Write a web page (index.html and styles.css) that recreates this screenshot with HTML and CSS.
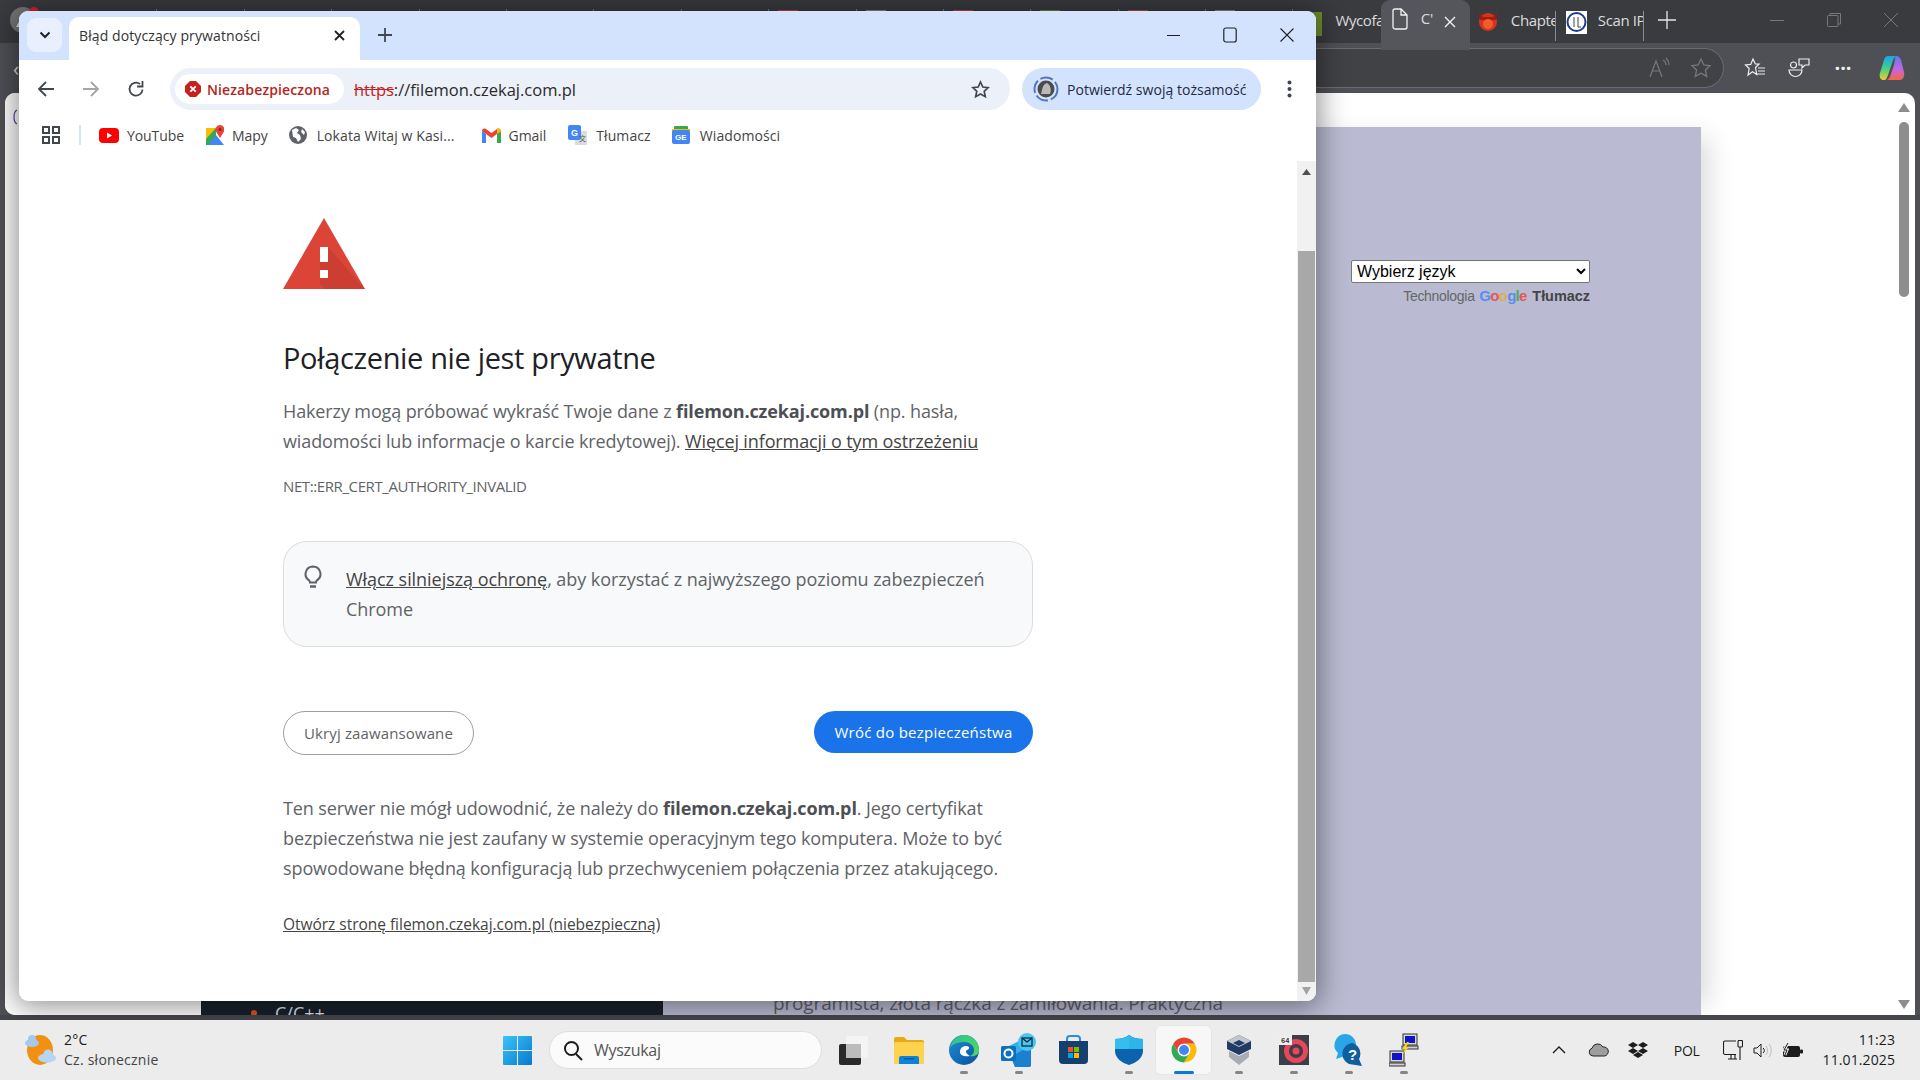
FILE: index.html
```html
<!DOCTYPE html>
<html lang="pl">
<head>
<meta charset="utf-8">
<title>Błąd dotyczący prywatności</title>
<link rel="stylesheet" href="styles.css">
</head>
<body>
<div class="desktop">
  <div class="screen">
    <!-- background Edge window -->
    <div class="edge">
      <div class="e-tabs">
        <div class="e-first"><svg width="28" height="28" viewBox="0 0 28 28"><circle cx="13" cy="15" r="13" fill="#777"/><path d="M6 22 14 8l6 14z" fill="#ddd"/><circle cx="24" cy="7" r="5" fill="#d9232e"/></svg></div>
        <div class="e-tab"></div>
        <div class="e-tab"></div>
        <div class="e-tab"></div>
        <div class="e-tab"></div>
        <div class="e-tab"></div>
        <div class="e-tab"></div>
        <div class="e-tab"></div>
        <div class="e-tab"></div>
        <div class="e-tab"><i class="fav fav-red"></i></div>
        <div class="e-tab"><i class="fav fav-grey"></i></div>
        <div class="e-tab"><i class="fav fav-red"></i></div>
        <div class="e-tab"><i class="fav fav-green"></i></div>
        <div class="e-tab"><i class="fav fav-red"></i></div>
        <div class="e-tab"><i class="fav fav-grey"></i></div>
        <div class="e-tab e-text"><i class="fav fav-mix"></i><span class="e-label">Wycofa</span></div>
        <div class="e-tab e-active">
          <svg width="16" height="22" viewBox="0 0 16 22" fill="none" stroke="#f2f2f2" stroke-width="1.3"><path d="M1 3a2 2 0 0 1 2-2h6l6 6v12a2 2 0 0 1-2 2H3a2 2 0 0 1-2-2zM9 1v6h6"/></svg>
          <span class="e-label e-label-short">C'</span>
          <svg width="12" height="12" viewBox="0 0 12 12" stroke="#f2f2f2" stroke-width="1.4"><path d="M1 1l10 10M11 1 1 11"/></svg>
        </div>
        <div class="e-tab e-text e-wide1">
          <svg width="20" height="22" viewBox="0 0 20 22"><circle cx="10" cy="12" r="9" fill="#d8321e"/><path d="M1 2l4 5h10l4-5-1 8H2z" fill="#a31a12"/><circle cx="10" cy="14" r="5" fill="#f25c2b"/></svg>
          <span class="e-label">Chapte</span>
        </div>
        <div class="e-tab e-text e-wide2">
          <svg width="21" height="24" viewBox="0 0 21 24"><rect y="1" width="21" height="23" fill="#fff"/><circle cx="10.500" cy="12" r="9" fill="#fff" stroke="#1c3f88" stroke-width="2"/><path d="M8 7v10M12 7v10h3" stroke="#444" fill="none"/></svg>
          <span class="e-label">Scan IP</span>
        </div>
        <svg class="e-plus" width="18" height="18" viewBox="0 0 18 18" stroke="#e6e6e6" stroke-width="1.3"><path d="M9 0v18M0 9h18"/></svg>
        <div class="e-controls">
          <svg width="14" height="14" viewBox="0 0 14 14" stroke="#77787c"><path d="M0 7.500h14"/></svg>
          <svg width="14" height="14" viewBox="0 0 14 14" fill="none" stroke="#77787c"><rect x=".5" y="2.500" width="10.500" height="11" rx="1"/><path d="M3 2.500V.5h10.500v10.500H11"/></svg>
          <svg width="14" height="14" viewBox="0 0 14 14" stroke="#77787c"><path d="M0 0l14 14M14 0 0 14"/></svg>
        </div>
      </div>
      <div class="e-toolbar">
        <span class="e-back">‹</span>
        <div class="e-address">
          <svg width="22" height="22" viewBox="0 0 22 22" fill="none" stroke="#77787c" stroke-width="1.2"><path d="M1 20 7 4l6 16M3 14h8M14 3c2 1 3 3 3 5M17 1c2 2 3 4 3 7"/></svg>
          <svg width="22" height="22" viewBox="0 0 22 22" fill="none" stroke="#77787c" stroke-width="1.300"><path d="M11 2l2.800 6 6.200.7-4.600 4.300 1.300 6.400-5.700-3.200-5.700 3.200L6.600 13 2 8.700 8.200 8z"/></svg>
        </div>
        <div class="e-tools">
          <svg width="22" height="22" viewBox="0 0 22 22" fill="none" stroke="#eee" stroke-width="1.200"><path d="M9 2l2.300 5H15l-3.500 3.500 1.200 7-4.200-2.800L4 18l1.200-6.500L1.500 8 6.700 7.400zM14 11h7M14 14h7M13 17h8"/></svg>
          <svg width="22" height="22" viewBox="0 0 22 22" fill="none" stroke="#eee" stroke-width="1.200"><circle cx="5.500" cy="8" r="3"/><path d="M11 2h10v6h-4l-3 3V8h-3zM1 13h13a6.500 6.500 0 0 1-13 0z"/></svg>
          <span class="e-dots">···</span>
          <svg width="26" height="26" viewBox="0 0 26 26"><defs><linearGradient id="cop1" x1="0" y1="0" x2="0" y2="1"><stop offset="0" stop-color="#19a4e5"/><stop offset=".5" stop-color="#3fd08b"/><stop offset="1" stop-color="#e9d22a"/></linearGradient><linearGradient id="cop2" x1="0" y1="0" x2="0" y2="1"><stop offset="0" stop-color="#5d7bf0"/><stop offset=".55" stop-color="#c466e4"/><stop offset="1" stop-color="#f5663e"/></linearGradient></defs><path d="M17 1c3 0 4 2 5 4l3 12c1 4-1 8-4 8H8c2-1 3-3 4-6l3-9c1-4 1-8 2-9z" fill="url(#cop2)"/><path d="M9 1h9c-3 1-4 4-5 7l-3 9c-1 3-2 7-4 8H4C1 25 0 21 1 18L5 5C6 2 7 1 9 1z" fill="url(#cop1)"/></svg>
        </div>
      </div>
      <div class="e-page">
        <div class="e-left"><svg width="6" height="16" viewBox="0 0 6 16" fill="none" stroke="#5a3fa8" stroke-width="1.200"><path d="M5 1C1 3 1 13 5 15"/></svg></div>
        <div class="e-dark"><span class="e-bullet"></span><span class="e-cpp">C/C++</span></div>
        <div class="e-panel">
          <div class="translate">
            <select class="lang"><option>Wybierz język</option></select>
            <div class="powered">Technologia <span class="g-logo"><b class="g1">G</b><b class="g2">o</b><b class="g3">o</b><b class="g1">g</b><b class="g4">l</b><b class="g2">e</b></span> <b class="tl">Tłumacz</b></div>
          </div>
          <p class="e-text-bottom">programista, złota rączka z zamiłowania. Praktyczna</p>
        </div>
        <div class="e-right">
          <div class="e-scroll">
            <svg width="12" height="9" viewBox="0 0 12 9"><path d="M6 0l6 9H0z" fill="#8d8d8d"/></svg>
            <div class="e-thumb"></div>
            <div class="e-scroll-fill"></div>
            <svg width="12" height="9" viewBox="0 0 12 9"><path d="M6 9 12 0H0z" fill="#8d8d8d"/></svg>
          </div>
        </div>
      </div>
    </div>

    <!-- foreground Chrome window -->
    <div class="chrome">
      <div class="c-tabs">
        <div class="tab-search"><svg width="12" height="8" viewBox="0 0 12 8" fill="none" stroke="#202124" stroke-width="2"><path d="M1.500 1.500 6 6l4.500-4.500"/></svg></div>
        <div class="c-tab">
          <span class="c-tab-title">Błąd dotyczący prywatności</span>
          <svg width="11" height="11" viewBox="0 0 11 11" stroke="#202124" stroke-width="1.800"><path d="M1 1l9 9M10 1 1 10"/></svg>
        </div>
        <svg class="c-plus" width="14" height="14" viewBox="0 0 14 14" stroke="#41474f" stroke-width="1.800"><path d="M7 0v14M0 7h14"/></svg>
        <div class="c-controls">
          <svg width="13" height="13" viewBox="0 0 13 13" stroke="#202124" stroke-width="1.100"><path d="M0 6.500h13"/></svg>
          <svg width="14" height="16" viewBox="0 0 14 16" fill="none" stroke="#202124" stroke-width="1.200"><rect x=".8" y="1" width="12.400" height="14" rx="2"/></svg>
          <svg width="14" height="14" viewBox="0 0 14 14" stroke="#202124" stroke-width="1.100"><path d="M.5.500l13 13M13.500.500l-13 13"/></svg>
        </div>
      </div>
      <div class="c-toolbar">
        <svg class="nav" width="18" height="18" viewBox="0 0 18 18" fill="none" stroke="#41474f" stroke-width="1.800"><path d="M17 9H2M9 2 2 9l7 7"/></svg>
        <svg class="nav" width="18" height="18" viewBox="0 0 18 18" fill="none" stroke="#a2a5a9" stroke-width="1.800"><path d="M1 9h15M9 2l7 7-7 7"/></svg>
        <svg class="nav" width="18" height="18" viewBox="0 0 18 18" fill="none" stroke="#41474f" stroke-width="1.800"><path d="M15.500 9.500A6.500 6.500 0 1 1 13 4"/><path d="M15.500 1v5.500H10" fill="none"/></svg>
        <div class="omnibox">
          <div class="chip">
            <svg width="16" height="16" viewBox="0 0 16 16"><path d="M5 0h6l5 5v6l-5 5H5l-5-5V5z" fill="#c5221f"/><path d="M5.300 5.300l5.400 5.400M10.700 5.300l-5.400 5.400" stroke="#fff" stroke-width="1.800"/></svg>
            <span class="chip-text">Niezabezpieczona</span>
          </div>
          <span class="url"><s class="https">https</s>://filemon.czekaj.com.pl</span>
          <svg class="star" width="19" height="19" viewBox="0 0 19 19" fill="none" stroke="#41474f" stroke-width="1.700"><path d="M9.500 2l2.300 5 5.400.6-4 3.700 1.100 5.400-4.800-2.700-4.800 2.700 1.100-5.400-4-3.700 5.400-.6z"/></svg>
        </div>
        <div class="profile">
          <svg width="26" height="26" viewBox="0 0 26 26"><circle cx="13" cy="13" r="11.500" fill="none" stroke="#5277b8" stroke-width="2" stroke-dasharray="13 3"/><circle cx="13" cy="13" r="8.500" fill="#4c4c4c"/><path d="M8 18c2-6 1-9 6-11 3 2 5 6 3 11z" fill="#b9b9b9"/></svg>
          <span>Potwierdź swoją tożsamość</span>
        </div>
        <svg class="menu" width="5" height="18" viewBox="0 0 5 18" fill="#41474f"><circle cx="2.500" cy="2.500" r="2"/><circle cx="2.500" cy="9" r="2"/><circle cx="2.500" cy="15.500" r="2"/></svg>
      </div>
      <div class="c-bookmarks">
        <svg class="apps" width="18" height="18" viewBox="0 0 18 18" fill="none" stroke="#41474f" stroke-width="2"><rect x="1" y="1" width="6" height="6"/><rect x="11" y="1" width="6" height="6"/><rect x="1" y="11" width="6" height="6"/><rect x="11" y="11" width="6" height="6"/></svg>
        <span class="bm-sep"></span>
        <span class="bm bm-yt"><svg width="20" height="15" viewBox="0 0 20 15"><rect width="20" height="15" rx="4" fill="#f00"/><path d="M8 4.500l5 3-5 3z" fill="#fff"/></svg>YouTube</span>
        <span class="bm bm-maps"><svg width="18" height="20" viewBox="0 0 18 20"><path d="M0 3h10v17H0z" fill="#34a853"/><path d="M2 20 10 10l8 10z" fill="#4285f4"/><path d="M0 14 10 3H0z" fill="#fbbc04"/><path d="M14 0a4.500 4.500 0 0 1 4 6.500L14 13l-4-6.500A4.500 4.500 0 0 1 14 0z" fill="#ea4335"/><circle cx="14" cy="4.500" r="1.500" fill="#8e2219"/></svg>Mapy</span>
        <span class="bm bm-web"><svg width="18" height="18" viewBox="0 0 18 18"><circle cx="9" cy="9" r="9" fill="#5f6368"/><path d="M3 4l4-2 3 2-2 3 3 2 1 4-3 3-2-4-3-1zM13 3l3 3-1 3-3-3z" fill="#fff"/></svg>Lokata Witaj w Kasi...</span>
        <span class="bm bm-gmail"><svg width="19" height="15" viewBox="0 0 19 15"><path d="M0 3v12h4V6z" fill="#4285f4"/><path d="M15 6v9h4V3z" fill="#34a853"/><path d="M0 3c0-2 2-3 4-2l5.500 4L15 1c2-1 4 0 4 2l-4 3-5.500 4L4 6z" fill="#ea4335"/><path d="M15 1c2-1 4 0 4 2l-4 3z" fill="#fbbc04"/></svg>Gmail</span>
        <span class="bm bm-tr"><svg width="19" height="20" viewBox="0 0 19 20"><rect x="7" y="6" width="12" height="14" rx="1" fill="#dadce0"/><rect width="13" height="15" rx="2" fill="#4285f4"/><text x="3" y="11" class="tr-g">G</text><text x="11" y="16" class="tr-a">文</text></svg>Tłumacz</span>
        <span class="bm bm-news"><svg width="18" height="18" viewBox="0 0 18 18"><rect x="2" y="0" width="14" height="8" rx="1" fill="#34a853"/><rect x="0" y="3" width="18" height="4" fill="#fbbc04"/><rect y="4" width="18" height="14" rx="2" fill="#4285f4"/><text x="3" y="14" class="news-g">GE</text></svg>Wiadomości</span>
      </div>
      <div class="c-page">
        <div class="interstitial">
          <svg class="warn" width="82" height="71" viewBox="0 0 82 71"><path d="M41 0l41 71H0z" fill="#db4437"/><path d="M37 29h8l37 42H42L37 66z" fill="#c13b30" opacity=".55"/><rect x="37" y="29" width="8" height="15" fill="#fff"/><rect x="37" y="52" width="8" height="8" fill="#fff"/></svg>
          <h1 class="title">Połączenie nie jest prywatne</h1>
          <p class="body-text">Hakerzy mogą próbować wykraść Twoje dane z <b>filemon.czekaj.com.pl</b> (np. hasła, wiadomości lub informacje o karcie kredytowej). <u>Więcej informacji o tym ostrzeżeniu</u></p>
          <p class="err">NET::ERR_CERT_AUTHORITY_INVALID</p>
          <div class="enhanced">
            <svg class="bulb" width="18" height="24" viewBox="0 0 18 24" fill="none" stroke="#5f6368" stroke-width="2"><path d="M9 1.500a7.500 7.500 0 0 1 4 13.800c-.6.500-1 1-1 2.200H6c0-1.200-.4-1.700-1-2.200A7.500 7.500 0 0 1 9 1.500z"/><path d="M6 21.500h6" stroke-width="2.500"/></svg>
            <p class="enhanced-text"><u>Włącz silniejszą ochronę</u>, aby korzystać z najwyższego poziomu zabezpieczeń Chrome</p>
          </div>
          <div class="actions">
            <button class="btn-ghost">Ukryj zaawansowane</button>
            <button class="btn-primary">Wróć do bezpieczeństwa</button>
          </div>
          <p class="details">Ten serwer nie mógł udowodnić, że należy do <b>filemon.czekaj.com.pl</b>. Jego certyfikat bezpieczeństwa nie jest zaufany w systemie operacyjnym tego komputera. Może to być spowodowane błędną konfiguracją lub przechwyceniem połączenia przez atakującego.</p>
          <p class="proceed"><u>Otwórz stronę filemon.czekaj.com.pl (niebezpieczną)</u></p>
        </div>
        <div class="c-scroll">
          <svg width="9" height="6" viewBox="0 0 9 6"><path d="M4.500 0 9 6H0z" fill="#505050"/></svg>
          <div class="c-scroll-gap"></div>
          <div class="c-thumb"></div>
          <svg width="9" height="9" viewBox="0 0 9 9"><path d="M4.500 9 9 1H0z" fill="#a3a3a3"/></svg>
        </div>
      </div>
    </div>
  </div>

  <div class="taskbar">
    <div class="weather">
      <svg width="36" height="32" viewBox="0 0 36 32"><ellipse cx="15" cy="16" rx="13" ry="15" fill="#f29111"/><ellipse cx="7" cy="9" rx="7" ry="4" fill="#a6c8ec"/><circle cx="7" cy="5" r="4" fill="#a6c8ec"/><ellipse cx="22" cy="24" rx="9" ry="4.500" fill="#b7d4f0"/><circle cx="23" cy="20" r="4.500" fill="#b7d4f0"/></svg>
      <div class="weather-text"><span class="temp">2°C</span><span class="cond">Cz. słonecznie</span></div>
    </div>
    <div class="win">
      <svg width="29" height="29" viewBox="0 0 29 29"><defs><linearGradient id="winb" x1="0" y1="0" x2="1" y2="1"><stop offset="0" stop-color="#3cc4f7"/><stop offset="1" stop-color="#0878d0"/></linearGradient></defs><path d="M0 1a1 1 0 0 1 1-1h13v14H0zM15 0h13a1 1 0 0 1 1 1v13H15zM0 15h14v14H1a1 1 0 0 1-1-1zM15 15h14v13a1 1 0 0 1-1 1H15z" fill="url(#winb)"/></svg>
    </div>
    <div class="search">
      <svg width="20" height="21" viewBox="0 0 20 21" fill="none" stroke="#1c1c1c" stroke-width="2"><circle cx="8.500" cy="8.500" r="6.500"/><path d="M13 14l6 6"/></svg>
      <span>Wyszukaj</span>
    </div>
    <div class="apps-bar">
      <div class="app"><svg width="29" height="29" viewBox="0 0 29 29"><rect y="8" width="22" height="21" rx="2" fill="#2a2a2a"/><rect x="7" width="22" height="22" rx="2" fill="#f5f5f5" opacity=".9"/><rect x="7" y="8" width="15" height="14" fill="#bcbcbc"/></svg></div>
      <div class="app"><svg width="30" height="27" viewBox="0 0 30 27"><path d="M0 2a2 2 0 0 1 2-2h8l3 3h15a2 2 0 0 1 2 2v4H0z" fill="#e9a913"/><rect y="5" width="30" height="22" rx="1.500" fill="#fcd24f"/><path d="M5 27v-6a2 2 0 0 1 2-2h16a2 2 0 0 1 2 2v6z" fill="#0d84d8"/><rect x="10" y="21" width="10" height="1.500" fill="#0a5aa0"/></svg></div>
      <div class="app"><svg width="30" height="30" viewBox="0 0 30 30"><defs><linearGradient id="edg1" x1="0" y1="0" x2="1" y2="1"><stop offset="0" stop-color="#2cc38f"/><stop offset="1" stop-color="#53d860"/></linearGradient><linearGradient id="edg2" x1="0" y1="0" x2="1" y2="1"><stop offset="0" stop-color="#1d8fd8"/><stop offset="1" stop-color="#0a4f9c"/></linearGradient></defs><circle cx="15" cy="15" r="15" fill="url(#edg2)"/><path d="M1 13C3 4 10 0 15 0c9 0 15 7 15 15 0 5-5 7-9 6 3-1 4-3 4-6 0-5-5-8-10-8-7 0-13 3-14 6z" fill="url(#edg1)"/><path d="M11 17c0-4 3-6 6-6 4 0 4 3 1 4-2 1-1 4 3 6 -4 1-10 0-10-4z" fill="#fff"/></svg><i class="dot"></i></div>
      <div class="app"><svg width="36" height="34" viewBox="0 0 36 34"><path d="M6 14 22 6h8v26a2 2 0 0 1-2 2H14z" fill="#30b2e8"/><path d="M10 24 30 12v20a2 2 0 0 1-2 2H14z" fill="#1b80d0"/><circle cx="26" cy="9" r="9" fill="#49c4f3"/><rect x="21" y="5" width="10" height="8" fill="none" stroke="#123" stroke-width="1.200"/><path d="M21 5l5 4 5-4" fill="none" stroke="#123" stroke-width="1.200"/><rect y="13" width="15" height="15" rx="1.500" fill="#0d6fc2"/><circle cx="7.500" cy="20.500" r="4" fill="none" stroke="#fff" stroke-width="2"/></svg><i class="dot"></i></div>
      <div class="app"><svg width="29" height="30" viewBox="0 0 29 30"><path d="M8 7V4a3 3 0 0 1 3-3h7a3 3 0 0 1 3 3v3" fill="none" stroke="#2b8fd8" stroke-width="2"/><path d="M0 6h29v19a4 4 0 0 1-4 4H4a4 4 0 0 1-4-4z" fill="#14406f"/><rect x="9" y="12" width="5" height="5" fill="#f25022"/><rect x="15" y="12" width="5" height="5" fill="#7fba00"/><rect x="9" y="18" width="5" height="5" fill="#00a4ef"/><rect x="15" y="18" width="5" height="5" fill="#ffb900"/></svg></div>
      <div class="app"><svg width="28" height="30" viewBox="0 0 28 30"><path d="M14 0c4 3 9 4 14 4v12c0 7-7 12-14 14C7 28 0 23 0 16V4c5 0 10-1 14-4z" fill="#0c62ad"/><path d="M14 0c4 3 9 4 14 4v10H14z" fill="#2fb4ea"/><path d="M0 4c5 0 10-1 14-4v14H0z" fill="#34bdef"/></svg><i class="dot"></i></div>
      <div class="app app-on"><svg width="30" height="30" viewBox="0 0 24 24"><path d="M3.340 7A10 10 0 0 1 20.660 7H12a5 5 0 0 0-4.330 7.500z" fill="#ea4335"/><path d="M20.660 7A10 10 0 0 1 12 22l4.330-7.500A5 5 0 0 0 12 7z" fill="#fbbc04"/><path d="M12 22A10 10 0 0 1 3.340 7l4.330 7.500a5 5 0 0 0 8.660 0z" fill="#34a853"/><circle cx="12" cy="12" r="5" fill="#fff"/><circle cx="12" cy="12" r="4" fill="#4285f4"/></svg><i class="dot dot-on"></i></div>
      <div class="app"><svg width="26" height="32" viewBox="0 0 26 32"><path d="M13 1l12 6v8L13 21 1 15V7z" fill="#1f3b66"/><path d="M13 1l12 6-12 6L1 7z" fill="#c3c7cc"/><path d="M13 6l6 3-6 3-6-3z" fill="#1f3b66"/><path d="M3 17l10 5 10-5v6L13 31 3 23z" fill="#a9adb3"/></svg><i class="dot"></i></div>
      <div class="app"><svg width="30" height="30" viewBox="0 0 30 30"><rect width="30" height="30" fill="#3a3f48"/><circle cx="17" cy="16" r="12" fill="#e8465a"/><circle cx="17" cy="16" r="7" fill="#3a3f48"/><circle cx="17" cy="16" r="3.500" fill="#e8465a"/><rect width="13" height="10" fill="#eee"/><text x="2" y="8" class="x64">64</text></svg><i class="dot"></i></div>
      <div class="app"><svg width="30" height="32" viewBox="0 0 30 32"><path d="M11 0a11 11 0 0 1 0 22l-9 3 2-6A11 11 0 0 1 11 0z" fill="#2aa6e6"/><path d="M18 9a11 11 0 0 0-3 21l13 2-3-7A11 11 0 0 0 18 9z" fill="#0d5f9f"/><text x="14" y="26" class="qmark">?</text></svg><i class="dot"></i></div>
      <div class="app"><svg width="30" height="34" viewBox="0 0 30 34"><rect x="14" y="1" width="14" height="11" fill="#d8d8d8" stroke="#333"/><rect x="16" y="3" width="10" height="7" fill="#1212c8"/><rect x="13" y="13" width="16" height="3" fill="#d0d0d0" stroke="#333"/><rect x="1" y="18" width="14" height="11" fill="#d8d8d8" stroke="#333"/><rect x="3" y="20" width="10" height="7" fill="#1212c8"/><rect y="30" width="16" height="3" fill="#d0d0d0" stroke="#333"/><path d="M18 9l-5 7h3l-3 6 7-8h-3l3-5z" fill="#f6d90f"/></svg><i class="dot"></i></div>
    </div>
    <div class="tray">
      <svg class="t-chev" width="14" height="8" viewBox="0 0 14 8" fill="none" stroke="#1c1c1c" stroke-width="1.400"><path d="M1 7l6-6 6 6"/></svg>
      <svg class="t-cloud" width="21" height="14" viewBox="0 0 21 14"><path d="M5 13a4 4 0 0 1-1-7.800 6 6 0 0 1 11-1.200A4.500 4.500 0 0 1 16.500 13z" fill="#9e9e9e" stroke="#222"/></svg>
      <svg class="t-drop" width="20" height="16" viewBox="0 0 20 16" fill="#1c1c1c"><path d="M5 0l5 3-5 3-5-3zM15 0l5 3-5 3-5-3zM5 6l5 3-5 3-5-3zM15 6l5 3-5 3-5-3zM10 10l5 3-5 3-5-3z"/></svg>
      <span class="t-lang">POL</span>
      <svg class="t-net" width="20" height="20" viewBox="0 0 20 20" fill="none" stroke="#1c1c1c" stroke-width="1.100"><path d="M13 1H2a1.500 1.500 0 0 0-1.500 1.500V13A1.500 1.500 0 0 0 2 14.500h11M5 19h9M8 14.500V19M12 14.500V19M17 7v13"/><rect x="15" y=".5" width="4.500" height="6.500" rx="1"/></svg>
      <svg class="t-vol" width="20" height="15" viewBox="0 0 20 15" fill="none" stroke="#1c1c1c" stroke-width="1"><path d="M1 5h3l4-4v13l-4-4H1z"/><path d="M10 5a3 3 0 0 1 0 5"/><path d="M13 3c2 3 2 6 0 9M16 1c3 4 3 9 0 13" stroke="#bbb"/></svg>
      <svg class="t-bat" width="21" height="15" viewBox="0 0 21 15"><rect x="1" y="3" width="17" height="11" rx="2" fill="#1c1c1c"/><rect x="18" y="6.500" width="3" height="4" rx="1" fill="#1c1c1c"/><path d="M6 0 2 7h3L3 12" fill="none" stroke="#ececec" stroke-width="3"/><path d="M6 0 2 7h3L3 12" fill="none" stroke="#1c1c1c" stroke-width="1"/></svg>
      <div class="clock"><span>11:23</span><span>11.01.2025</span></div>
    </div>
  </div>
</div>
</body>
</html>
```

FILE: styles.css
```css
* { box-sizing: border-box; }
html, body { margin: 0; padding: 0; }
body { font-family: "Open Sans", "Noto Sans", sans-serif; overflow: hidden; }
p, h1 { margin: 0; }
svg { display: block; flex: none; }

.desktop { width: 1920px; height: 1080px; display: flex; flex-direction: column; }
.screen { position: relative; height: 1020px; background: #45464a; overflow: hidden; }

/* Edge window */
.edge { height: 1015px; display: flex; flex-direction: column; background: #4f5055; }
.e-tabs { height: 43px; background: #3a3b3f; display: flex; align-items: flex-start; color: #e8e8e8; }
.e-first { width: 70px; padding: 5px 0 0 10px; height: 43px; flex: none; }
.e-tab { width: 87.4px; height: 43px; flex: none; position: relative; padding: 10px 0 0 9px; overflow: hidden; display: flex; gap: 12px; }
.e-tab::after { content: ""; position: absolute; right: 0; top: 9px; width: 1px; height: 22px; background: #77787c; }
.fav { display: block; width: 20px; height: 20px; flex: none; }
.fav-red { background: #c8443c; }
.fav-grey { background: #8c8c8c; }
.fav-green { background: #6f8f2c; }
.fav-mix { background: linear-gradient(90deg, #b0472b 50%, #6f8f2c 50%); width: 20px; margin-top: 2px; height: 24px; }
.e-label { font-size: 15px; line-height: 24px; letter-spacing: -.4px; white-space: nowrap; color: #dcdcdc; margin-top: -2px; }
.e-text { align-items: flex-start; gap: 13px; }
.e-text::after { display: none; }
.e-active { background: #55565b; height: 50px; border-radius: 9px 9px 0 0; width: 89px; padding: 8px 0 0 11px; align-items: flex-start; gap: 0; z-index: 1; }
.e-active::after { display: none; }
.e-active .e-label-short { width: 36px; padding-left: 13px; }
.e-active svg:last-child { margin-top: 8px; }
.e-wide1 { width: 86px; padding: 10px 0 0 8px; }
.e-wide1::after, .e-wide2::after { display: block; right: 0; top: 11px; height: 30px; background: #8b8c90; }
.e-wide2 { width: 88px; padding: 10px 0 0 10px; gap: 11px; }
.e-plus { margin: 11px 0 0 14px; }
.e-controls { display: flex; gap: 43px; margin: 13px 0 0 94px; }

.e-toolbar { height: 50px; background: #4f5055; display: flex; align-items: center; padding-bottom: 0; }
.e-back { color: #ddd; width: 42px; padding-left: 13px; font-size: 20px; }
.e-address { width: 1682px; height: 40px; margin-top: -1px; background: #414246; border: 1px solid #6c6d72; border-radius: 20px; display: flex; align-items: center; justify-content: flex-end; gap: 19px; padding-right: 11px; }
.e-tools { display: flex; align-items: center; gap: 22px; margin-left: 20px; }
.e-dots { color: #eee; font-size: 20px; font-weight: 700; width: 22px; text-align: center; line-height: 22px; }
.e-tools svg:last-child { margin-left: 3px; }

.e-page { flex: 1; display: flex; margin-left: 5px; margin-right: 5px; background: #fff; border-radius: 10px 10px 0 10px; overflow: hidden; min-height: 0; }
.e-left { width: 196px; background: #fff; padding: 16px 0 0 7px; }
.e-dark { width: 462px; margin-top: 34px; background: #19202c; display: flex; align-items: flex-end; color: #dfe3ea; padding: 0 0 0 50px; gap: 18px; overflow: hidden; }
.e-bullet { width: 6px; height: 6px; border-radius: 50%; background: #d9531e; margin-bottom: -1px; }
.e-cpp { font-size: 18px; line-height: 16px; margin-bottom: -6px; }
.e-panel { width: 1038px; margin-top: 34px; background: #babbd2; box-shadow: 18px 0 24px -10px rgba(0, 0, 0, .14); display: flex; flex-direction: column; justify-content: space-between; padding: 133px 0 0 0; }
.translate { width: 239px; margin-left: 688px; }
.lang { display: block; width: 239px; height: 23px; font: 16px "Liberation Sans", Arial, sans-serif; background: #fff; color: #000; border: 1px solid #767676; border-radius: 2px; padding: 0 0 0 1px; }
.powered { font: 14px/26px "Liberation Sans", Arial, sans-serif; color: #666; margin-left: -52px; text-align: right; white-space: nowrap; letter-spacing: -.3px; }
.g-logo { font: 700 15px/1 "Liberation Sans", Arial, sans-serif; margin-left: 1px; letter-spacing: -.7px; opacity: .8; }
.g-logo b { font-weight: 700; }
.g1 { color: #4285f4; } .g2 { color: #ea4335; } .g3 { color: #e5b022; } .g4 { color: #34a853; }
.tl { color: #444; font-weight: 700; font-size: 14.500px; letter-spacing: -.05px; margin-left: 2px; }
.e-text-bottom { font-size: 19px; line-height: 26px; color: #5e5e68; margin: 0 0 -1px 110px; white-space: nowrap; letter-spacing: -.15px; }
.e-right { flex: 1; display: flex; justify-content: flex-end; }
.e-scroll { width: 16px; padding: 10px 0 6px; display: flex; flex-direction: column; align-items: center; margin-right: 3px; }
.e-thumb { width: 10px; height: 175px; margin-top: 10px; border-radius: 5px; background: #8e8e8e; }
.e-scroll-fill { flex: 1; }

/* Chrome window */
.chrome { position: absolute; left: 19px; top: 11px; width: 1297px; height: 990px; border-radius: 9px; overflow: hidden; background: #fff; display: flex; flex-direction: column; box-shadow: 0 2px 28px 4px rgba(0, 0, 0, .42); color: #202124; }
.c-tabs { height: 49px; background: #d3e3fd; display: flex; align-items: flex-start; flex: none; }
.tab-search { width: 35px; height: 34px; margin: 7px 0 0 8px; background: #e9f0fd; border-radius: 9px; display: flex; align-items: center; justify-content: center; }
.c-tab { width: 291px; height: 43px; margin: 6px 0 0 7px; background: #fff; border-radius: 10px 10px 0 0; display: flex; align-items: flex-start; justify-content: space-between; padding: 9px 15px 0 10px; }
.c-tab svg { margin-top: 4px; }
.c-tab-title { font-size: 14px; line-height: 20px; letter-spacing: .1px; color: #333; white-space: nowrap; }
.c-plus { margin: 17px 0 0 18px; }
.c-controls { display: flex; margin: 16px 0 0 775px; gap: 43px; align-items: center; }
.c-controls svg { margin: 0; }

.c-toolbar { height: 58px; flex: none; display: flex; align-items: center; padding-left: 18px; }
.nav { margin-right: 27px; }
.omnibox { width: 840px; height: 42px; margin-left: -2px; background: #ebf0f9; border-radius: 21px; display: flex; align-items: center; padding-left: 5px; }
.chip { width: 169px; height: 30px; background: #fff; border-radius: 15px; display: flex; align-items: center; gap: 6px; padding-left: 10px; flex: none; }
.chip-text { color: #b3261e; font-size: 14px; font-weight: 600; letter-spacing: .12px; white-space: nowrap; }
.url { font-size: 16.5px; color: #2a2a2a; margin-left: 10px; letter-spacing: 0; white-space: nowrap; }
.https { color: #c5221f; }
.star { margin-left: auto; margin-right: 20px; }
.profile { width: 239px; height: 42px; margin-left: 12px; background: #d3e3fd; border-radius: 21px; display: flex; align-items: center; gap: 8px; padding-left: 11px; font-size: 14px; letter-spacing: .03px; color: #1d2a44; white-space: nowrap; }
.menu { margin-left: 26px; }

.c-bookmarks { height: 43px; flex: none; display: flex; align-items: flex-start; padding: 8px 0 0 23px; font-size: 14px; color: #444; letter-spacing: -.08px; white-space: nowrap; }
.apps { margin-top: 0; }
.bm-sep { width: 2px; height: 20px; background: #d3e3fd; margin: -1px 0 0 19px; }
.bm { display: flex; align-items: center; gap: 8px; height: 18px; }
.bm-yt { margin-left: 18px; }
.bm-maps { margin-left: 22px; }
.bm-web { margin-left: 21px; gap: 10px; letter-spacing: .1px; }
.bm-gmail { margin-left: 27px; }
.bm-tr { margin-left: 22px; gap: 9px; letter-spacing: .1px; }
.bm-news { margin-left: 21px; gap: 10px; letter-spacing: .1px; }
.tr-g { font: 700 9px "Liberation Sans", sans-serif; fill: #fff; }
.tr-a { font: 7px "Noto Sans CJK SC", sans-serif; fill: #555; }
.news-g { font: 700 8px "Liberation Sans", sans-serif; fill: #fff; }

.c-page { flex: 1; min-height: 0; display: flex; justify-content: space-between; margin-top: 0; }
.interstitial { width: 750px; margin-left: 264px; padding-top: 57px; color: #5f6368; }
.title { font-size: 29px; line-height: 40px; font-weight: 400; color: #202124; letter-spacing: -.35px; margin-top: 49px; white-space: nowrap; }
.body-text { font-size: 18px; line-height: 30px; letter-spacing: -.12px; margin-top: 18px; width: 720px; }
.body-text b, .details b { font-weight: 700; color: #4c4f54; }
.body-text u, .proceed u, .enhanced-text u { color: #444; }
.err { font-size: 15px; line-height: 20px; letter-spacing: -.4px; margin-top: 20px; }
.enhanced { width: 750px; height: 106px; margin-top: 45px; border: 1px solid #dadce0; border-radius: 24px; background: #f8f9fa; display: flex; padding: 23px 30px 0 20px; gap: 24px; }
.enhanced-text { font-size: 18px; line-height: 30px; letter-spacing: -.05px; margin-top: -1px; }
.actions { display: flex; justify-content: space-between; margin-top: 64px; align-items: flex-start; }
.btn-ghost { width: 191px; height: 44px; border: 1px solid #9aa0a6; border-radius: 22px; background: #fff; color: #5f6368; font: 15px "Open Sans", sans-serif; letter-spacing: .12px; padding: 0; }
.btn-primary { width: 219px; height: 42px; border: 0; border-radius: 21px; background: #1a73e8; color: #fff; font: 500 15px "Open Sans", sans-serif; letter-spacing: .25px; padding: 0; }
.details { font-size: 18px; line-height: 30px; letter-spacing: -.1px; margin-top: 38px; }
.proceed { font-size: 15.5px; line-height: 22px; letter-spacing: -.03px; margin-top: 30px; white-space: nowrap; }

.c-scroll { width: 19px; background: #f1f1f1; display: flex; flex-direction: column; align-items: center; padding-top: 8px; flex: none; }
.c-scroll-gap { height: 76px; }
.c-thumb { width: 17px; height: 731px; background: #a8a8a8; margin-bottom: 4px; }

/* Taskbar */
.taskbar { height: 60px; background: #ececec; display: flex; align-items: center; position: relative; }
.weather { display: flex; align-items: center; gap: 3px; width: 503px; padding-left: 25px; flex: none; }
.weather-text { display: flex; flex-direction: column; font-size: 14px; line-height: 20px; letter-spacing: .25px; color: #1c1c1c; }
.cond { color: #444; }
.win { width: 46px; flex: none; }
.search { width: 273px; height: 38px; background: #fbfbfb; border: 1px solid #dedede; border-radius: 19px; display: flex; align-items: center; gap: 11px; padding-left: 13px; font-size: 16px; letter-spacing: -.3px; color: #555; flex: none; }
.apps-bar { display: flex; margin-left: 4px; flex: none; }
.app { width: 55px; height: 48px; display: flex; align-items: center; justify-content: center; border-radius: 5px; position: relative; }
.app-on { background: #f7f7f7; box-shadow: 0 0 0 1px #e6e6e6; }
.dot { position: absolute; left: 50%; bottom: 0; margin-left: -4px; width: 8px; height: 3px; border-radius: 2px; background: #858585; }
.dot-on { width: 20px; margin-left: -10px; background: #0a78d4; }
.x64 { font: 700 7px "Liberation Mono", monospace; fill: #333; }
.qmark { font: 700 15px "Liberation Sans", sans-serif; fill: #fff; }
.tray { display: flex; align-items: center; margin-left: auto; padding-right: 25px; font-size: 14px; color: #1c1c1c; }
.t-cloud { margin-left: 22px; }
.t-drop { margin-left: 19px; }
.t-lang { margin-left: 26px; letter-spacing: -.3px; }
.t-net { margin-left: 23px; }
.t-vol { margin-left: 10px; }
.t-bat { margin-left: 9px; }
.clock { display: flex; flex-direction: column; align-items: flex-end; line-height: 20px; margin-left: 20px; letter-spacing: .1px; }
```
